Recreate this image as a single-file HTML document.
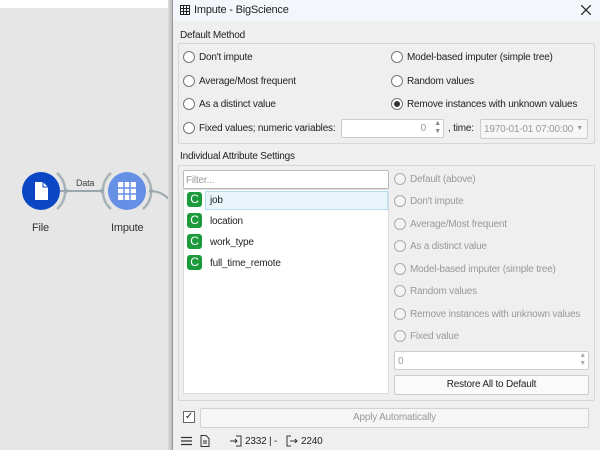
<!DOCTYPE html>
<html><head><style>
*{box-sizing:border-box;margin:0;padding:0}
body{width:600px;height:450px;overflow:hidden;background:#e6e6e6;font-family:"Liberation Sans",sans-serif;font-size:10px;letter-spacing:-0.2px;color:#222;position:relative}
.a{position:absolute;white-space:nowrap}
.t{margin-top:1px}
.rad{position:absolute;width:12px;height:12px;border:1px solid #777;border-radius:50%;background:#fff}
.dis{color:#999}
.dis .rad,.rad.dis{border-color:#aaa;background:#f4f4f4}
.box{position:absolute;border:1px solid #d6d6d6;border-radius:2px}
.ic{position:absolute;width:15px;height:15px;background:#1d9a3c;border-radius:3px;color:#fff;font-size:12px;text-align:center;line-height:15px}
</style></head><body>
<div class="a" style="left:0;top:0;width:172px;height:8px;background:#fff"></div>
<svg class="a" style="left:0;top:150px" width="175" height="90">
<path d="M60 41 H103" stroke="#9aa8ad" stroke-width="2"/>
<path d="M149 41 C160 41 165 45 172 52" stroke="#9aa8ad" stroke-width="2" fill="none"/>
<circle cx="41" cy="41" r="19" fill="#0b47c4"/>
<path d="M57 23 A24 24 0 0 1 57 59" stroke="#a8b3b8" stroke-width="2.5" fill="none"/>
<circle cx="66" cy="41" r="2" fill="#9aa8ad"/>
<path d="M35 32 h8 l5 5 v13 h-13 z" fill="#fff"/>
<path d="M43 32 v5 h5" stroke="#0b47c4" fill="none"/>
<circle cx="127" cy="41" r="19" fill="#6590e6"/>
<path d="M111 23 A24 24 0 0 0 111 59" stroke="#a8b3b8" stroke-width="2.5" fill="none"/>
<path d="M143 23 A24 24 0 0 1 143 59" stroke="#a8b3b8" stroke-width="2.5" fill="none"/>
<circle cx="102" cy="41" r="2" fill="#9aa8ad"/><circle cx="151" cy="41" r="2" fill="#9aa8ad"/>
<rect x="118" y="32" width="18" height="18" fill="#fff" rx="1"/>
<path d="M118 38h18M118 44h18M124 32v18M130 32v18" stroke="#6590e6" stroke-width="1.5"/>
<text x="76" y="36" font-size="9" fill="#444" font-family="Liberation Sans">Data</text>
<text x="32" y="81" font-size="11" fill="#333" font-family="Liberation Sans">File</text>
<text x="111" y="81" font-size="11" fill="#333" font-family="Liberation Sans">Impute</text>
</svg>
<div class="a" style="left:168px;top:0;width:4px;height:450px;background:linear-gradient(90deg,#ddd,#bbb)"></div>
<div class="a" style="left:172px;top:0;width:428px;height:450px;background:#efefef;border-left:1px solid #999"></div>
<div class="a" style="left:173px;top:0;width:427px;height:21px;background:#f3f7fb"></div>
<svg class="a" style="left:180px;top:5px" width="10" height="10"><rect x="0.5" y="0.5" width="9" height="9" fill="none" stroke="#222"/><path d="M0 3.5h10M0 6.5h10M3.5 0v10M6.5 0v10" stroke="#222"/></svg>
<div class="a" style="left:194px;top:4px;font-size:11px">Impute - BigScience</div>
<svg class="a" style="left:581px;top:5px" width="10" height="10"><path d="M0 0L10 10M10 0L0 10" stroke="#222" stroke-width="1.2"/></svg>

<div class="a t" style="left:180px;top:29px">Default Method</div>
<div class="box" style="left:178px;top:43px;width:417px;height:101px"></div>
<div class="rad" style="left:183px;top:51px"></div><div class="a t" style="left:199px;top:51px">Don't impute</div>
<div class="rad" style="left:183px;top:75px"></div><div class="a t" style="left:199px;top:75px">Average/Most frequent</div>
<div class="rad" style="left:183px;top:98px"></div><div class="a t" style="left:199px;top:98px">As a distinct value</div>
<div class="rad" style="left:183px;top:122px"></div><div class="a t" style="left:199px;top:122px">Fixed values; numeric variables:</div>
<div class="rad" style="left:391px;top:51px"></div><div class="a t" style="left:407px;top:51px">Model-based imputer (simple tree)</div>
<div class="rad" style="left:391px;top:75px"></div><div class="a t" style="left:407px;top:75px">Random values</div>
<div class="rad" style="left:391px;top:98px"><div style="position:absolute;left:2px;top:2px;width:6px;height:6px;border-radius:50%;background:#333"></div></div><div class="a t" style="left:407px;top:98px">Remove instances with unknown values</div>
<div class="a" style="left:341px;top:119px;width:103px;height:19px;background:#fff;border:1px solid #ccc;border-radius:2px"><span class="a dis" style="right:17px;top:3px">0</span><span class="a" style="right:2px;top:0;font-size:7px;color:#888;line-height:8px">▲<br>▼</span></div>
<div class="a t" style="left:448px;top:122px">, time:</div>
<div class="a" style="left:480px;top:119px;width:108px;height:20px;background:#f6f6f6;border:1px solid #ccc;border-radius:2px"><span class="a dis" style="left:3px;top:4px">1970-01-01 07:00:00</span><span class="a" style="right:4px;top:5px;font-size:7px;color:#999">▼</span></div>

<div class="a t" style="left:180px;top:150px">Individual Attribute Settings</div>
<div class="box" style="left:178px;top:165px;width:417px;height:236px"></div>
<div class="a" style="left:183px;top:170px;width:206px;height:19px;background:#fff;border:1px solid #bbb;border-radius:2px"><span class="a" style="left:2px;top:4px;color:#999">Filter...</span></div>
<div class="a" style="left:183px;top:189px;width:206px;height:205px;background:#fff;border:1px solid #ddd"></div>
<div class="a" style="left:205px;top:191px;width:183px;height:19px;background:#eaf4fb;border:1px solid #b5dcf0"></div>
<div class="ic" style="left:187px;top:192px">C</div><div class="a t" style="left:210px;top:194px">job</div>
<div class="ic" style="left:187px;top:213px">C</div><div class="a t" style="left:210px;top:215px">location</div>
<div class="ic" style="left:187px;top:234px">C</div><div class="a t" style="left:210px;top:236px">work_type</div>
<div class="ic" style="left:187px;top:255px">C</div><div class="a t" style="left:210px;top:257px">full_time_remote</div>

<div class="dis">
<div class="rad" style="left:394px;top:173px"></div><div class="a t" style="left:410px;top:173px">Default (above)</div>
<div class="rad" style="left:394px;top:195px"></div><div class="a t" style="left:410px;top:195px">Don't impute</div>
<div class="rad" style="left:394px;top:218px"></div><div class="a t" style="left:410px;top:218px">Average/Most frequent</div>
<div class="rad" style="left:394px;top:240px"></div><div class="a t" style="left:410px;top:240px">As a distinct value</div>
<div class="rad" style="left:394px;top:263px"></div><div class="a t" style="left:410px;top:263px">Model-based imputer (simple tree)</div>
<div class="rad" style="left:394px;top:285px"></div><div class="a t" style="left:410px;top:285px">Random values</div>
<div class="rad" style="left:394px;top:308px"></div><div class="a t" style="left:410px;top:308px">Remove instances with unknown values</div>
<div class="rad" style="left:394px;top:330px"></div><div class="a t" style="left:410px;top:330px">Fixed value</div>
</div>
<div class="a" style="left:394px;top:351px;width:195px;height:19px;background:#fff;border:1px solid #ccc;border-radius:2px"><span class="a dis" style="left:3px;top:4px">0</span><span class="a" style="right:2px;top:0;font-size:7px;color:#aaa;line-height:8px">▲<br>▼</span></div>
<div class="a" style="left:394px;top:375px;width:195px;height:20px;background:#fafafa;border:1px solid #ccc;border-radius:2px;text-align:center;line-height:18px">Restore All to Default</div>

<div class="a" style="left:183px;top:411px;width:12px;height:12px;background:#fff;border:1px solid #666;font-size:10px;line-height:10px;text-align:center">✓</div>
<div class="a" style="left:200px;top:408px;width:389px;height:20px;background:#f6f6f6;border:1px solid #d2d2d2;border-radius:2px;text-align:center;line-height:18px;color:#999">Apply Automatically</div>

<svg class="a" style="left:181px;top:436px" width="12" height="10"><path d="M0 1.5h11M0 5h11M0 8.5h11" stroke="#333" stroke-width="1.3"/></svg>
<svg class="a" style="left:200px;top:435px" width="10" height="12"><path d="M1 .5h5l3 3v8h-8z" fill="none" stroke="#333"/><path d="M3 6h4M3 8h4" stroke="#333"/></svg>
<svg class="a" style="left:230px;top:435px" width="12" height="12"><path d="M6 1h5v10h-5" fill="none" stroke="#333"/><path d="M0 6h7M5 4l2 2-2 2" fill="none" stroke="#333"/></svg>
<div class="a" style="left:245px;top:436px">2332 | -</div>
<svg class="a" style="left:286px;top:435px" width="12" height="12"><path d="M5 1H1v10h4" fill="none" stroke="#333"/><path d="M4 6h7M9 4l2 2-2 2" fill="none" stroke="#333"/></svg>
<div class="a" style="left:301px;top:436px">2240</div>
</body></html>
